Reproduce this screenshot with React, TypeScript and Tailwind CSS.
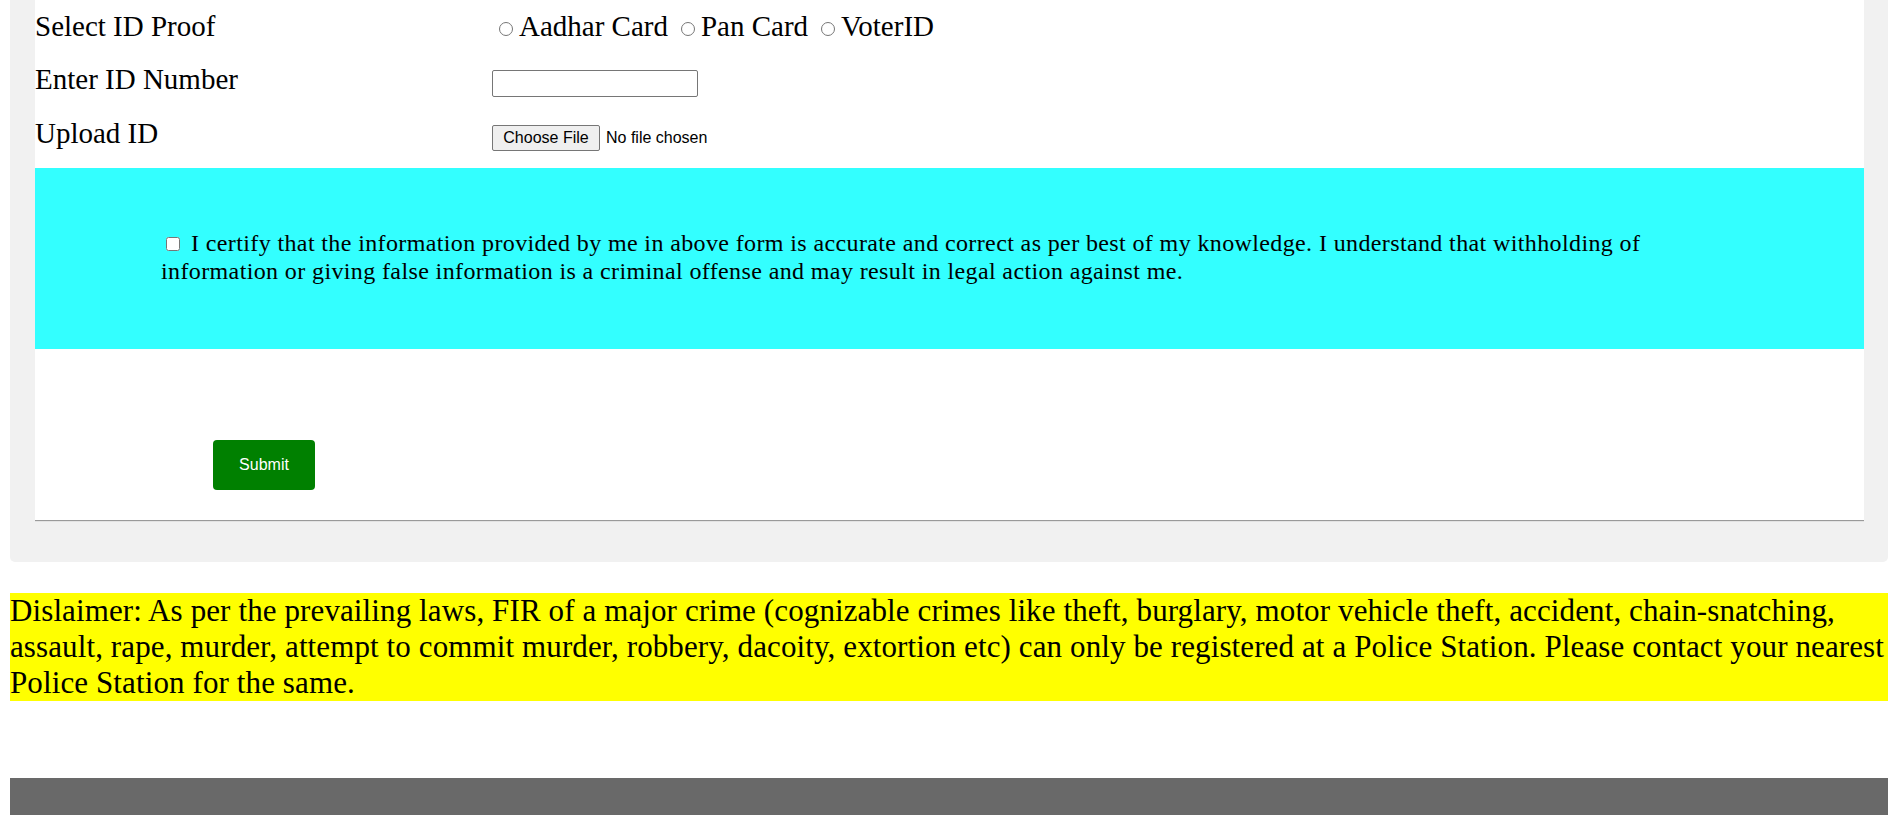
const serif = "font-['Liberation_Serif','Times_New_Roman',serif]"
const sans = "font-['Liberation_Sans',Arial,sans-serif]"

const idOptions = ['Aadhar Card', 'Pan Card', 'VoterID']

export default function App() {
  return (
    <div className={`min-h-[815px] bg-white text-black ${serif}`}>
      {/* Form panel */}
      <div className="ml-[10px] rounded-b-[5px] bg-[#f1f1f1] pl-[25px] pr-[24px] pb-[40px]">
        <div className="bg-white">
          {/* ID rows */}
          <div className="grid h-[168px] grid-cols-[457px_1fr] content-start gap-y-[20px] pt-[10px] text-[29px] leading-[33px]">
            <div>Select ID Proof</div>
            <div className="whitespace-nowrap">
              {idOptions.map((opt, i) => (
                <span key={opt}>
                  <input
                    type="radio"
                    name="idproof"
                    className={`${i === 0 ? 'ml-[7px]' : 'ml-[13px]'} mr-[6px] h-[14px] w-[14px]`}
                  />
                  {opt}
                </span>
              ))}
            </div>

            <div>Enter ID Number</div>
            <div>
              <input
                type="text"
                className="mt-[7px] block h-[27px] w-[206px] rounded-[2px] border border-[#767676] bg-white px-[2px] text-[13px]"
              />
            </div>

            <div>Upload ID</div>
            <div className={`mt-[8px] flex items-center gap-[6px] text-[16px] leading-[18px] ${sans}`}>
              <button className="h-[26px] w-[108px] rounded-[2px] border border-[#767676] bg-[#efefef] text-[16px]">
                Choose File
              </button>
              <span>No file chosen</span>
            </div>
          </div>

          {/* Declaration */}
          <div className="bg-[#33ffff] pl-[126px] pr-[126px] pt-[62px] pb-[64px] text-[24px] leading-[27.6px] tracking-[0.38px]">
            <p>
              <input type="checkbox" className="ml-[5px] mr-[11px] mb-[2px] h-[14px] w-[14px]" />
              I certify that the information provided by me in above form is accurate and correct as per best of my knowledge. I understand that withholding of information or giving false information is a criminal offense and may result in legal action against me.
            </p>
          </div>

          {/* Submit */}
          <div className="pl-[178px] pt-[91px] pb-[30px]">
            <button className={`h-[50px] w-[102px] rounded-[4px] bg-[#008000] text-[16px] leading-[18px] text-white ${sans}`}>
              Submit
            </button>
          </div>
          <div className="border-t border-b border-t-[#9a9a9a] border-b-[#e3e3e3]" />
        </div>
      </div>

      {/* Disclaimer */}
      <p className="mt-[31px] ml-[10px] bg-[#ffff00] text-[31px] leading-[36px] tracking-[0.11px]">
        Dislaimer: As per the prevailing laws, FIR of a major crime (cognizable crimes like theft, burglary, motor vehicle theft, accident, chain-snatching, assault, rape, murder, attempt to commit murder, robbery, dacoity, extortion etc) can only be registered at a Police Station. Please contact your nearest Police Station for the same.
      </p>

      {/* Footer */}
      <div className="mt-[77px] ml-[10px] h-[60px] bg-[#696969]" />
    </div>
  )
}
